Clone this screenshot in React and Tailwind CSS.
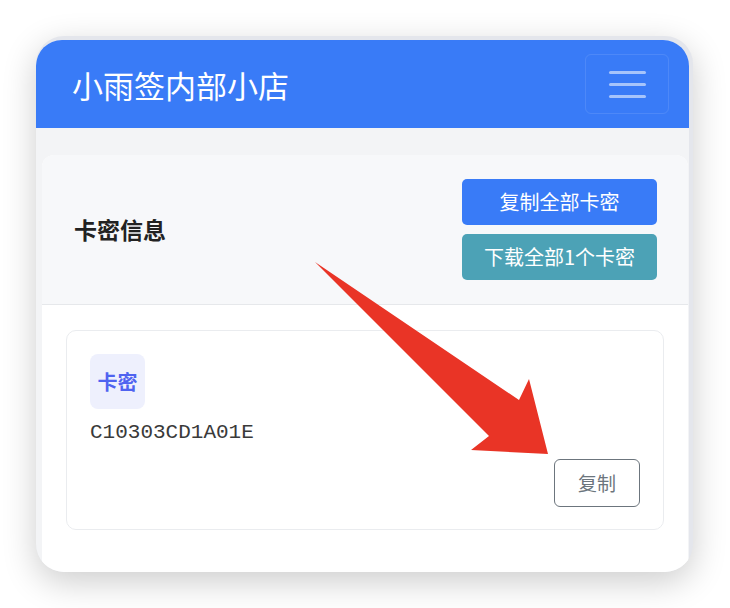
import React from 'react'

const cjk = { fontFamily: '"Noto Sans CJK SC", "Noto Sans", sans-serif' }

function Arrow() {
  return (
    <svg className="absolute left-0 top-0 pointer-events-none" width="730" height="608" viewBox="0 0 730 608">
      <polygon points="315,262 519,400 529,379 548,454 471,450 489,436" fill="#e93426" />
    </svg>
  )
}

export default function App() {
  return (
    <div className="relative w-[730px] h-[608px] bg-white overflow-hidden" style={cjk}>
      <div className="pl-[36px] pt-[36px]">
        <div className="w-[657px] h-[536px] rounded-[28px] bg-[#e4e6ec] pt-[4px] pr-[4px] overflow-hidden shadow-[0_10px_34px_rgba(0,0,0,0.2)]">
          <div className="flex flex-col h-full bg-[#f3f4f6] rounded-tl-[26px] rounded-tr-[26px] overflow-hidden">
            {/* header */}
            <div className="h-[88px] shrink-0 bg-[#397bf7] flex items-center justify-between pl-[36px] pr-[20px]">
              <span className="text-[31px] text-white leading-none">小雨签内部小店</span>
              <button className="w-[84px] h-[60px] border border-white/10 rounded-[6px] flex flex-col items-center justify-center gap-[9px]">
                <span className="block w-[37px] h-[3px] rounded-full bg-white/55" />
                <span className="block w-[37px] h-[3px] rounded-full bg-white/55" />
                <span className="block w-[37px] h-[3px] rounded-full bg-white/55" />
              </button>
            </div>

            {/* body */}
            <div className="flex-1 pt-[27px] pl-[6px] pr-[1px] flex flex-col">
              <div className="flex-1 bg-white rounded-t-[12px] overflow-hidden flex flex-col">
                <div className="h-[150px] shrink-0 bg-[#f7f8fa] border-b border-[#e6e8eb] flex items-center justify-between pl-[32px] pr-[31px]">
                  <span className="text-[23px] font-bold text-[#222]">卡密信息</span>
                  <div className="flex flex-col gap-[9px]">
                    <button className="w-[195px] h-[46px] rounded-[5px] bg-[#397bf7] text-white text-[20px]">复制全部卡密</button>
                    <button className="w-[195px] h-[46px] rounded-[5px] bg-[#4ca2b6] text-white text-[20px]">下载全部1个卡密</button>
                  </div>
                </div>

                <div className="pt-[25px] px-[24px]">
                  <div className="h-[200px] border border-[#eaecef] rounded-[10px] pl-[23px] pr-[23px] pt-[23px] flex flex-col">
                    <div className="w-[55px] h-[55px] rounded-[8px] bg-[#eef0fd] flex items-center justify-center">
                      <span className="text-[20px] font-bold text-[#4f63f0]">卡密</span>
                    </div>
                    <div className="mt-[12px] text-[21px] leading-[24px] text-[#3a3a3a]" style={{ fontFamily: '"Liberation Mono", "Courier New", monospace' }}>C10303CD1A01E</div>
                    <div className="flex justify-end mt-[14px]">
                      <button className="w-[86px] h-[48px] rounded-[6px] border border-[#6c757d] text-[#6c757d] text-[19px]">复制</button>
                    </div>
                  </div>
                </div>
              </div>
            </div>
          </div>
        </div>
      </div>
      <Arrow />
    </div>
  )
}
